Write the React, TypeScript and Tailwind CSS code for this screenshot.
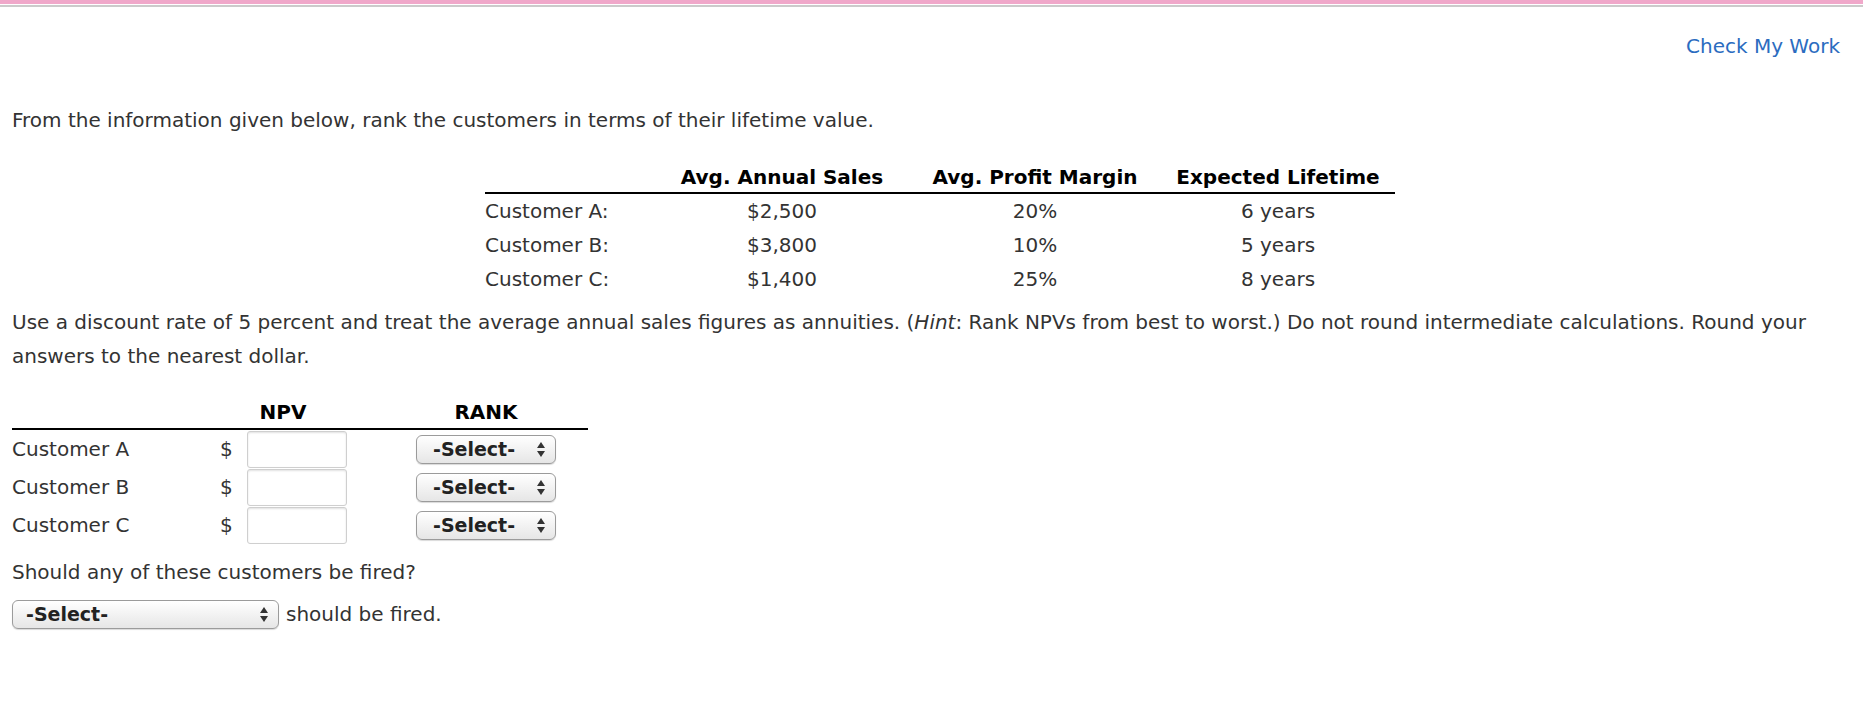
import React from 'react';

const infoRows = [
  { name: 'Customer A:', sales: '$2,500', margin: '20%', life: '6 years' },
  { name: 'Customer B:', sales: '$3,800', margin: '10%', life: '5 years' },
  { name: 'Customer C:', sales: '$1,400', margin: '25%', life: '8 years' },
];

const npvRows = ['Customer A', 'Customer B', 'Customer C'];

// mac-style stepper arrows on the fake select
const Arrows = () => (
  <svg width="10" height="17" viewBox="0 0 10 17" className="shrink-0">
    <path d="M5 1 L9 7 H1 Z" fill="#333" />
    <path d="M5 16 L9 10 H1 Z" fill="#333" />
  </svg>
);

const FakeSelect: React.FC<{ width: string; pad: string }> = ({ width, pad }) => (
  <div
    className={`${width} ${pad} h-[29px] flex items-center justify-between pr-[9px] rounded-[6px] border border-[#9b9b9b] bg-gradient-to-b from-[#ffffff] to-[#e6e6e6] shadow-[0_1px_1px_rgba(0,0,0,0.15)] text-[19px] font-bold text-[#222] leading-none`}
  >
    <span>-Select-</span>
    <Arrows />
  </div>
);

export default function App() {
  return (
    <div className="min-h-screen bg-white text-[#333] text-[20px] font-['DejaVu_Sans',Verdana,sans-serif]">
      {/* top rules */}
      <div className="h-[4px] bg-[#f0a8ca]" />
      <div className="mt-[1px] h-[2px] bg-[#cbcbcb]" />

      <div className="w-[1852px] pl-[12px] pr-[12px]">
        <div className="flex justify-end pt-[27px] leading-[24px]">
          <a className="text-[#2b6cc0] cursor-pointer">Check My Work</a>
        </div>

        <p className="mt-[50px] leading-[24px]">
          From the information given below, rank the customers in terms of their lifetime value.
        </p>

        {/* given data */}
        <div className="ml-[473px] mt-[30px] w-[910px]">
          <div className="grid grid-cols-[170px_254px_252px_234px] h-[32px] pb-[5px] items-center font-bold text-black border-b-2 border-black">
            <div />
            <div className="text-center">Avg. Annual Sales</div>
            <div className="text-center">Avg. Profit Margin</div>
            <div className="text-center">Expected Lifetime</div>
          </div>
          {infoRows.map((r) => (
            <div key={r.name} className="grid grid-cols-[170px_254px_252px_234px] h-[34px] items-center">
              <div>{r.name}</div>
              <div className="text-center">{r.sales}</div>
              <div className="text-center">{r.margin}</div>
              <div className="text-center">{r.life}</div>
            </div>
          ))}
        </div>

        <p className="mt-[9px] leading-[34px] pr-[16px]">
          Use a discount rate of 5 percent and treat the average annual sales figures as annuities. (<i>Hint</i>: Rank NPVs from best to worst.) Do not round intermediate calculations. Round your answers to the nearest dollar.
        </p>

        {/* answer table */}
        <div className="mt-[24px] w-[576px]">
          <div className="grid grid-cols-[190px_162px_224px] h-[33px] pb-[2px] items-center font-bold text-black border-b-2 border-black">
            <div />
            <div className="text-center">NPV</div>
            <div className="text-center pl-[20px]">RANK</div>
          </div>
          {npvRows.map((n) => (
            <div key={n} className="grid grid-cols-[190px_162px_224px] h-[38px] items-center">
              <div>{n}</div>
              <div className="flex items-center pl-[18px] gap-[14px]">
                <span>$</span>
                <div className="w-[100px] h-[37px] rounded-[3px] border border-[#cfcfcf] bg-white shadow-[inset_0_1px_2px_rgba(0,0,0,0.12)]" />
              </div>
              <div className="pl-[52px]">
                <FakeSelect width="w-[140px]" pad="pl-[16px]" />
              </div>
            </div>
          ))}
        </div>

        <p className="mt-[16px] leading-[24px]">Should any of these customers be fired?</p>

        <div className="mt-[15px] flex items-center gap-[7px]">
          <FakeSelect width="w-[267px]" pad="pl-[13px]" />
          <span>should be fired.</span>
        </div>
      </div>
    </div>
  );
}
